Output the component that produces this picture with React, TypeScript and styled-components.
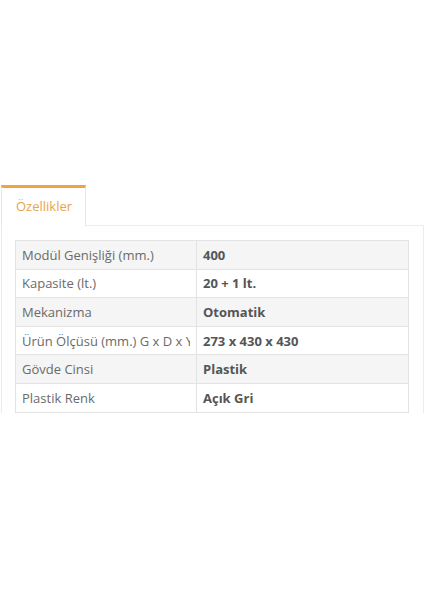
import React from 'react';
import styled, { createGlobalStyle } from 'styled-components';

const GlobalStyle = createGlobalStyle`
    html, body {
        margin: 0;
        padding: 0;
        background: #ffffff;
        font-family: "Open Sans", "Liberation Sans", sans-serif;
    }
`

const Page = styled.div`
    width: 424px;
    height: 413px;
    padding-top: 185px;
    box-sizing: border-box;
    overflow: hidden;
`

const Tabs = styled.div`
    display: flex;
    margin-left: 1px;
`

const Tab = styled.div<{ active?: boolean }>`
    width: 85px;
    height: 41px;
    box-sizing: border-box;
    border-top: 3px solid ${p => (p.active ? '#f0a43e' : 'transparent')};
    border-left: 1px solid #e6e6e6;
    border-right: 1px solid #e6e6e6;
    margin-bottom: -1px;
    background: #ffffff;
    position: relative;
    z-index: 1;
    padding: 9px 0 0 14px;
    font-size: 13px;
    color: ${p => (p.active ? '#e9a34f' : '#666')};
`

const Panel = styled.div`
    margin-left: 1px;
    border: 1px solid #ececec;
    padding: 14px 14px 40px 13px;
`

const Table = styled.table`
    width: 394px;
    border-collapse: collapse;
    table-layout: fixed;
    font-size: 13px;
`

const Row = styled.tr<{ shaded: boolean }>`
    background: ${p => (p.shaded ? '#f5f5f5' : '#ffffff')};
`

const Label = styled.td`
    width: 181px;
    height: 28.6px;
    box-sizing: border-box;
    padding: 0 6px;
    border: 1px solid #e3e3e3;
    color: #6a6a6a;
`

const LabelText = styled.span`
    display: block;
    white-space: nowrap;
    overflow: hidden;
`

const Value = styled.td`
    padding: 0 6px;
    border: 1px solid #e3e3e3;
    color: #555555;
    font-weight: 700;
    white-space: nowrap;
`

const rows: [string, string][] = [
    ['Modül Genişliği (mm.)', '400'],
    ['Kapasite (lt.)', '20 + 1 lt.'],
    ['Mekanizma', 'Otomatik'],
    ['Ürün Ölçüsü (mm.) G x D x Y', '273 x 430 x 430'],
    ['Gövde Cinsi', 'Plastik'],
    ['Plastik Renk', 'Açık Gri'],
]

function App(): React.ReactElement {
    return (
        <Page>
            <GlobalStyle />
            <Tabs>
                <Tab active>Özellikler</Tab>
            </Tabs>
            <Panel>
                <Table>
                    <tbody>
                        {rows.map(([label, value], index) => (
                            <Row shaded={index % 2 === 0} key={index}>
                                <Label><LabelText>{label}</LabelText></Label>
                                <Value>{value}</Value>
                            </Row>
                        ))}
                    </tbody>
                </Table>
            </Panel>
        </Page>
    );
}

export default App;
